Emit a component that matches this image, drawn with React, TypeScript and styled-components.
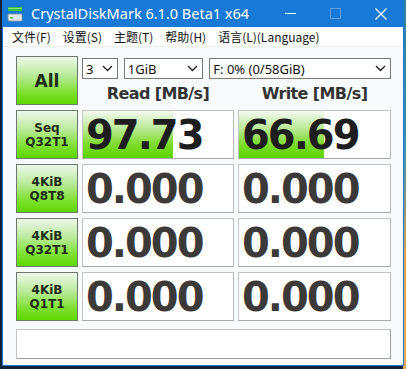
import React from 'react'
import styled, { createGlobalStyle } from 'styled-components'

const GlobalStyle = createGlobalStyle`
    html, body {
        margin: 0;
        padding: 0;
        width: 406px;
        height: 369px;
        overflow: hidden;
        background: linear-gradient(to bottom, #2d7fa3 0%, #3a8fb0 40%, #e3a24a 70%, #e8a850 100%);
    }
    #root {
        height: 369px;
    }
`

interface Row {
    line1: string
    line2: string
    read: string
    write: string
    readFill: number
    writeFill: number
}

const rows: Row[] = [
    { line1: 'Seq', line2: 'Q32T1', read: '97.73', write: '66.69', readFill: 90, writeFill: 85 },
    { line1: '4KiB', line2: 'Q8T8', read: '0.000', write: '0.000', readFill: 0, writeFill: 0 },
    { line1: '4KiB', line2: 'Q32T1', read: '0.000', write: '0.000', readFill: 0, writeFill: 0 },
    { line1: '4KiB', line2: 'Q1T1', read: '0.000', write: '0.000', readFill: 0, writeFill: 0 },
]

const menus = ['文件(F)', '设置(S)', '主题(T)', '帮助(H)', '语言(L)(Language)']

const Chevron = () => (
    <svg width='11' height='7' viewBox='0 0 11 7'>
        <path d='M1 1 L5.5 5.5 L10 1' fill='none' stroke='#222' strokeWidth='1.4' />
    </svg>
)

const AppIcon = () => (
    <svg width='16' height='16' viewBox='0 0 16 16'>
        <rect x='1' y='1' width='14' height='4' fill='#3cc43c' />
        <rect x='1' y='2' width='14' height='1' fill='#7fe07f' />
        <rect x='1' y='8' width='14' height='7' rx='1' fill='#dfe6e8' />
        <rect x='1' y='8' width='14' height='7' rx='1' fill='none' stroke='#8a9aa0' strokeWidth='0.8' />
        <rect x='3' y='11' width='3' height='1.5' fill='#5fbf3a' />
    </svg>
)

const CrystalDiskMark = () => {
    return (
        <Desktop>
            <GlobalStyle />
            <Window>
                <TitleBar>
                    <TitleLeft>
                        <AppIcon />
                        <TitleText>CrystalDiskMark 6.1.0 Beta1 x64</TitleText>
                    </TitleLeft>
                    <Controls>
                        <ControlButton>
                            <svg width='11' height='11' viewBox='0 0 11 11'>
                                <path d='M0 5.5 H11' stroke='#fff' strokeWidth='1' />
                            </svg>
                        </ControlButton>
                        <ControlButton>
                            <svg width='11' height='11' viewBox='0 0 11 11'>
                                <rect x='0.5' y='0.5' width='10' height='10' fill='none' stroke='#5e9de0' strokeWidth='1' />
                            </svg>
                        </ControlButton>
                        <ControlButton>
                            <svg width='12' height='12' viewBox='0 0 12 12'>
                                <path d='M0.5 0.5 L11.5 11.5 M11.5 0.5 L0.5 11.5' stroke='#fff' strokeWidth='1.2' />
                            </svg>
                        </ControlButton>
                    </Controls>
                </TitleBar>
                <MenuBar>
                    {menus.map((m) => (
                        <MenuItem key={m}>{m}</MenuItem>
                    ))}
                </MenuBar>
                <Content>
                    <Grid>
                        <TestButton big>All</TestButton>
                        <TopArea>
                            <Selects>
                                <Select width={36}>
                                    <span>3</span>
                                    <Chevron />
                                </Select>
                                <Select width={80}>
                                    <span>1GiB</span>
                                    <Chevron />
                                </Select>
                                <Select width={183}>
                                    <span>F: 0% (0/58GiB)</span>
                                    <Chevron />
                                </Select>
                            </Selects>
                            <Headers>
                                <Header>Read [MB/s]</Header>
                                <Header>Write [MB/s]</Header>
                            </Headers>
                        </TopArea>
                        {rows.map((r, i) => (
                            <React.Fragment key={i}>
                                <TestButton>
                                    {r.line1}
                                    <br />
                                    {r.line2}
                                </TestButton>
                                <ValueCell>
                                    <Fill style={{ width: `${r.readFill}px` }} />
                                    <Value active={r.readFill > 0}>{r.read}</Value>
                                </ValueCell>
                                <ValueCell>
                                    <Fill style={{ width: `${r.writeFill}px` }} />
                                    <Value active={r.writeFill > 0}>{r.write}</Value>
                                </ValueCell>
                            </React.Fragment>
                        ))}
                    </Grid>
                    <Comment />
                </Content>
            </Window>
        </Desktop>
    )
}

const Desktop = styled.div`
    width: 406px;
    height: 369px;
    background: linear-gradient(to right, #10233a 0px, #10233a 403px, transparent 403px);
`

const Window = styled.div`
    box-sizing: border-box;
    margin-left: 2px;
    width: 402px;
    height: 366px;
    border: 1px solid #1a78d4;
    border-top: none;
    background: #f8fbfc;
    display: flex;
    flex-direction: column;
`

const TitleBar = styled.div`
    height: 27px;
    background: #1979d6;
    display: flex;
    align-items: center;
    justify-content: space-between;
    padding-left: 4px;
`

const TitleLeft = styled.div`
    display: flex;
    align-items: center;
    gap: 8px;
`

const TitleText = styled.span`
    color: #fff;
    font-family: 'Noto Sans', 'Open Sans', sans-serif;
    font-size: 14.5px;
    line-height: 27px;
`

const Controls = styled.div`
    display: flex;
    height: 27px;
`

const ControlButton = styled.div`
    width: 45px;
    height: 27px;
    display: flex;
    align-items: center;
    justify-content: center;
`

const MenuBar = styled.div`
    height: 19px;
    background: #fff;
    display: flex;
    align-items: center;
    padding-left: 3px;
    border-bottom: 1px solid #f0f0f0;
`

const MenuItem = styled.span`
    font-family: 'Noto Sans CJK SC', 'Noto Sans', sans-serif;
    font-size: 12px;
    color: #111;
    padding: 0 6px 0 6px;
    line-height: 19px;
`

const Content = styled.div`
    flex: 1;
    padding: 9px 0 0 13px;
    display: flex;
    flex-direction: column;
`

const Grid = styled.div`
    display: grid;
    grid-template-columns: 62px 152px 153px;
    grid-auto-rows: 49px;
    column-gap: 4px;
    row-gap: 5px;
`

const TestButton = styled.div<{ big?: boolean }>`
    box-sizing: border-box;
    border: 1px solid #6b7a6b;
    background: linear-gradient(to bottom, #eef7ec 0%, #b8ea98 40%, #7ee030 75%, #5ed600 100%);
    display: flex;
    align-items: center;
    justify-content: center;
    text-align: center;
    font-family: 'DejaVu Sans', Verdana, sans-serif;
    font-weight: bold;
    font-size: ${(p) => (p.big ? '17px' : '12px')};
    line-height: 14px;
    color: #1c2e14;
`

const TopArea = styled.div`
    grid-column: 2 / 4;
    display: flex;
    flex-direction: column;
`

const Selects = styled.div`
    display: flex;
    gap: 6px;
    margin-top: 2px;
`

const Select = styled.div<{ width: number }>`
    box-sizing: border-box;
    width: ${(p) => p.width}px;
    height: 21px;
    border: 1px solid #7a7a7a;
    background: #fff;
    display: flex;
    align-items: center;
    justify-content: space-between;
    padding: 0 4px 0 3px;
    font-family: 'Noto Sans', 'Open Sans', sans-serif;
    font-size: 13px;
    color: #111;
`

const Headers = styled.div`
    display: grid;
    grid-template-columns: 152px 153px;
    column-gap: 4px;
    margin-top: 4px;
`

const Header = styled.div`
    text-align: center;
    font-family: 'DejaVu Sans', Verdana, sans-serif;
    font-weight: bold;
    font-size: 16px;
    letter-spacing: -0.6px;
    line-height: 22px;
    color: #333;
`

const ValueCell = styled.div`
    box-sizing: border-box;
    position: relative;
    border: 1px solid #c4c4c4;
    border-bottom-color: #a8a8a8;
    border-right-color: #b8b8b8;
    background: #fff;
    overflow: hidden;
`

const Fill = styled.div`
    position: absolute;
    left: 0;
    top: 0;
    bottom: 0;
    background: linear-gradient(to bottom, #f4faf0 0%, #bdea9c 35%, #7fdc2c 70%, #5cd400 100%);
`

const Value = styled.div<{ active?: boolean }>`
    position: relative;
    padding-left: 3px;
    font-family: 'DejaVu Sans', Verdana, sans-serif;
    font-weight: bold;
    font-size: 40px;
    letter-spacing: -2px;
    line-height: 48px;
    color: ${(p) => (p.active ? '#1d1d1d' : '#3b3a39')};
`

const Comment = styled.div`
    box-sizing: border-box;
    margin-top: 8px;
    width: 375px;
    height: 30px;
    border: 1px solid #c4c4c4;
    border-bottom-color: #a0a0a0;
    border-right-color: #a0a0a0;
    background: #fff;
`

export default CrystalDiskMark
